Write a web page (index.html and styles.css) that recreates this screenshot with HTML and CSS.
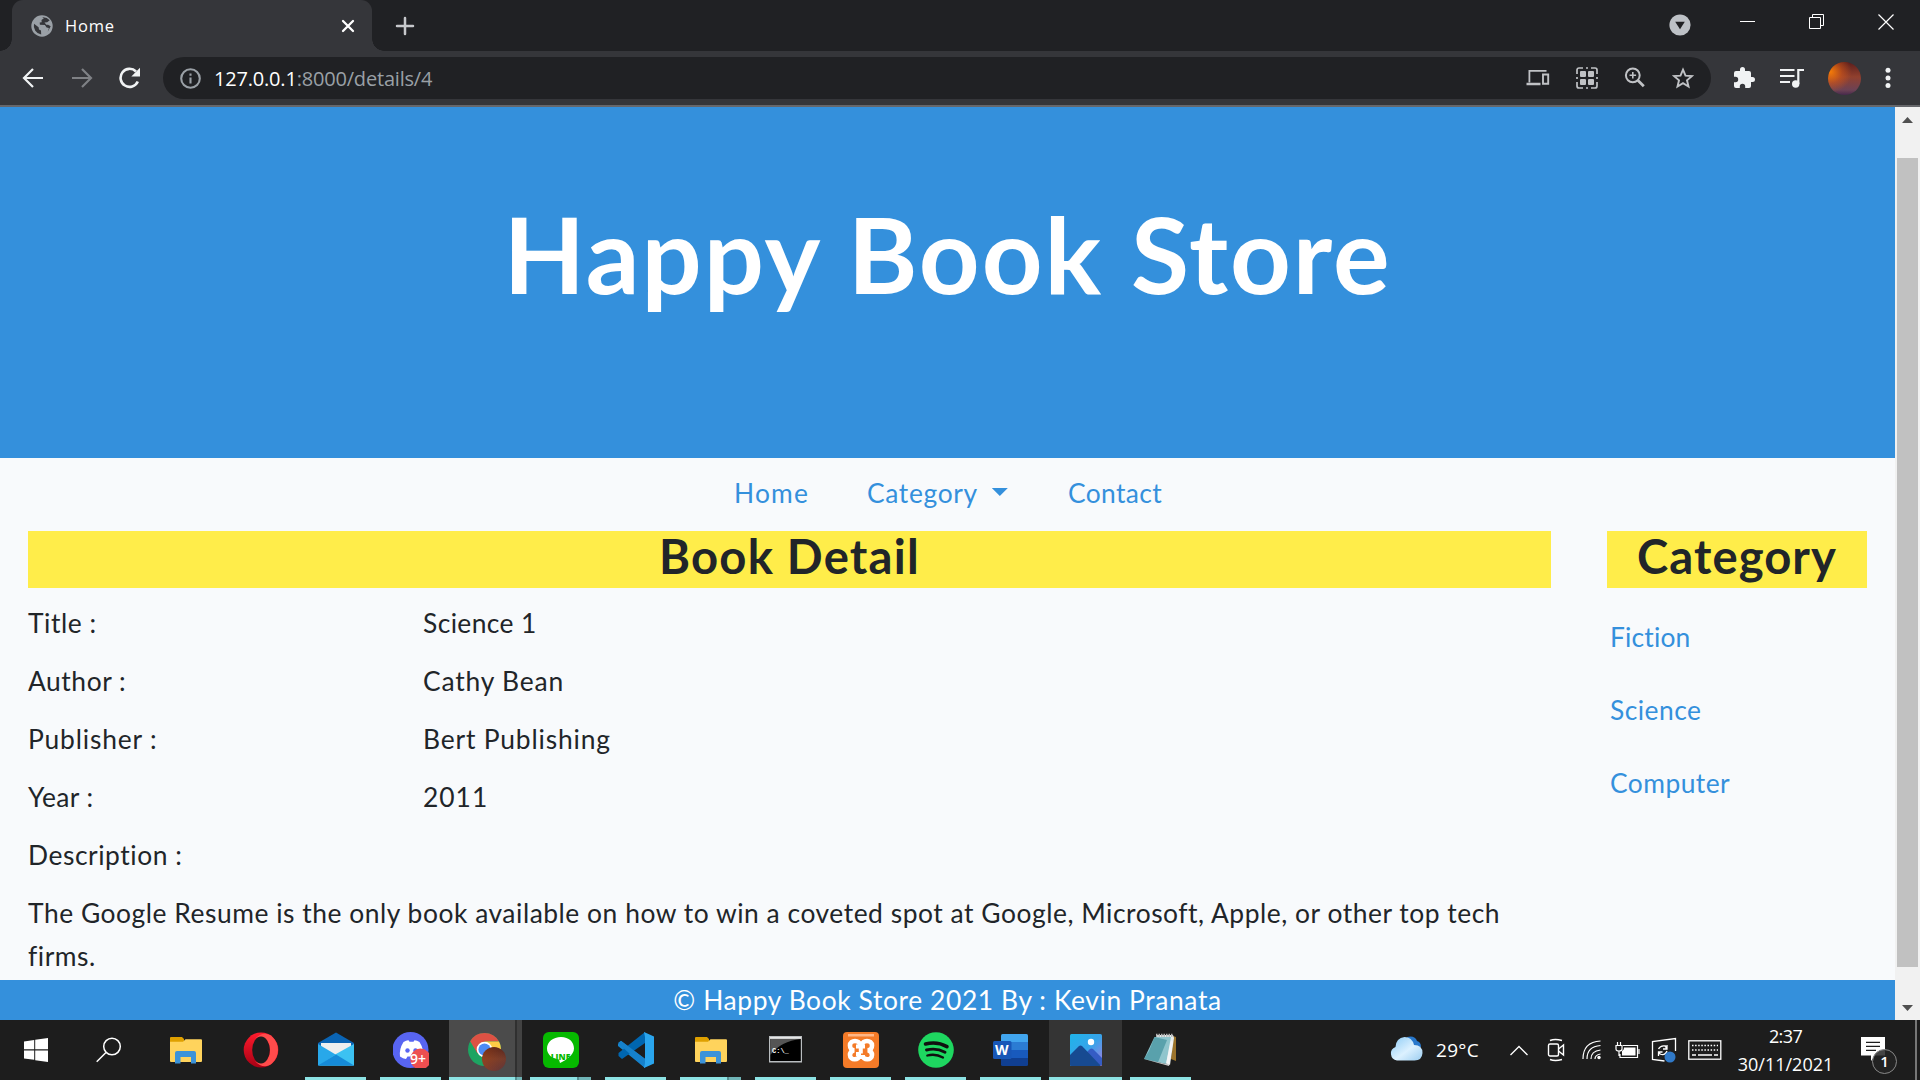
FILE: index.html
```html
<!DOCTYPE html>
<html lang="en">
<head>
<meta charset="utf-8">
<title>Home</title>
<link rel="stylesheet" href="styles.css">
</head>
<body>
<div class="screen">
  <header class="tabstrip">
    <div class="tab">
      <svg class="globe" width="22" height="22" viewBox="0 0 22 22"><circle cx="11" cy="11" r="10.7" fill="#9aa0a6"/><path fill="#35363a" d="M3 8.8l4.6 3.4.4 2.2 2 1.1.2 4A8.8 8.8 0 0 1 3 8.8zM11.2 2.2l1.7 1.1-2.4 1.8.2 2.1-2 .3.2 2.2 5 .2 1.7 2.6 2.3.4-1.2 3.8 3-5.5-2.6-1.5-1.8.1-1.8-2.2 2.7-.3 2.5-2.1a8.8 8.8 0 0 0-7.5-3z"/></svg>
      <span class="tab-title">Home</span>
      <svg class="tab-close" width="14" height="14" viewBox="0 0 14 14" stroke="#fff" stroke-width="2.3" stroke-linecap="round"><path d="M2 2l10 10M12 2L2 12"/></svg>
    </div>
    <svg class="newtab" width="20" height="20" viewBox="0 0 20 20" stroke="#c6c8cb" stroke-width="2.5" stroke-linecap="round"><path d="M10 2v16M2 10h16"/></svg>
    <div class="window-buttons">
      <svg class="tabsearch" width="22" height="22" viewBox="0 0 22 22"><circle cx="11" cy="11" r="10.6" fill="#bdc1c6"/><path d="M6.2 7.8h9.6L11 15.2z" fill="#202124"/></svg>
      <svg class="winbtn" width="16" height="16" viewBox="0 0 16 16"><path d="M0 7.5h15" stroke="#fff"/></svg>
      <svg class="winbtn" width="16" height="16" viewBox="0 0 16 16" fill="none" stroke="#fff"><path d="M.5 3.5h11v11H.5zM3.500 3V.5h11v11h-3"/></svg>
      <svg class="winbtn" width="16" height="16" viewBox="0 0 16 16" stroke="#fff" stroke-width="1.2"><path d="M.5.5l15 15M15.500.5l-15 15"/></svg>
    </div>
  </header>
  <div class="toolbar">
    <svg width="22" height="22" viewBox="0 0 22 22" fill="none" stroke="#f1f3f4" stroke-width="2.2"><path d="M21 11H2.500M11 2L2 11l9 9"/></svg>
    <svg class="forward" width="22" height="22" viewBox="0 0 22 22" fill="none" stroke="#7f8185" stroke-width="2.2"><path d="M1 11h18.500M11 2l9 9-9 9"/></svg>
    <svg class="reload" width="22" height="22" viewBox="0 0 22 22" fill="none" stroke="#f1f3f4" stroke-width="2.6"><path d="M18.800 14.500A9 9 0 1 1 17 4.500"/><path d="M21 .8v8.700h-8.700z" fill="#f1f3f4" stroke="none"/></svg>
    <div class="omnibox">
      <svg width="21" height="21" viewBox="0 0 21 21" fill="none" stroke="#9aa0a6" stroke-width="2.1"><circle cx="10.500" cy="10.500" r="9.300"/><path d="M10.500 9.500v6M10.500 5.500v2.200"/></svg>
      <div class="url"><span class="host">127.0.0.1</span>:8000/details/4</div>
      <div class="omni-icons" >
        <svg width="24" height="22" viewBox="0 0 24 22" fill="none" stroke="#c0c2c5" stroke-width="1.800"><path d="M20.500 3.900H3.400V15.500"/><path d="M.5 17h14" stroke-width="2.500"/><path d="M17 7.500h5.200v9.300H17z" stroke-width="1.900"/></svg>
        <svg width="22" height="22" viewBox="0 0 22 22"><path d="M1 7V3a2 2 0 0 1 2-2h4M10 1h2M15 1h4a2 2 0 0 1 2 2v4M21 10v2M21 15v4a2 2 0 0 1-2 2h-4M12 21h-2M7 21H3a2 2 0 0 1-2-2v-4M1 12v-2" fill="none" stroke="#c0c2c5" stroke-width="1.700"/><g fill="#c0c2c5"><rect x="4" y="4" width="6" height="6" rx="1"/><rect x="12" y="4" width="6" height="6" rx="1"/><rect x="4" y="12" width="6" height="6" rx="1"/><rect x="12" y="12" width="6" height="6" rx="1"/></g></svg>
        <svg width="22" height="22" viewBox="0 0 22 22" fill="none" stroke="#c0c2c5" stroke-width="2"><circle cx="8.800" cy="8.300" r="6.900"/><path d="M13.800 13.300l6 6" stroke-width="2.700"/><path d="M8.800 5v6.600M5.500 8.300h6.600" stroke-width="1.600"/></svg>
        <svg width="22" height="22" viewBox="0 0 22 22" fill="none" stroke="#c0c2c5" stroke-width="1.900"><path d="M11 2.700l2.500 5.900 6.300.5-4.800 4.200 1.500 6.200-5.500-3.300-5.500 3.300L7 13.300 2.200 9.100l6.300-.5z"/></svg>
      </div>
    </div>
    <div class="actions">
      <svg width="24" height="24" viewBox="0 0 24 24"><path fill="#f1f3f4" d="M20.500 11H19V7a2 2 0 0 0-2-2h-4V3.500a2.500 2.500 0 0 0-5 0V5H4a2 2 0 0 0-2 2v3.800h1.500a2.700 2.700 0 0 1 0 5.400H2V20a2 2 0 0 0 2 2h3.800v-1.500a2.700 2.700 0 0 1 5.400 0V22H17a2 2 0 0 0 2-2v-4h1.500a2.500 2.500 0 0 0 0-5z"/></svg>
      <svg width="24" height="24" viewBox="0 0 24 24" fill="none" stroke="#f1f3f4" stroke-width="2.200"><path d="M0 4h14.500M0 10h14.500M0 16h10"/><path d="M18.300 18V4H24"/><circle cx="15.700" cy="18" r="3.700" fill="#f1f3f4" stroke="none"/></svg>
      <div class="avatar"></div>
      <svg class="menu" width="6" height="22" viewBox="0 0 6 22" fill="#f1f3f4"><circle cx="3" cy="3.300" r="2.500"/><circle cx="3" cy="11" r="2.500"/><circle cx="3" cy="18.600" r="2.500"/></svg>
    </div>
  </div>

  <div class="viewport">
    <div class="page">
      <div class="hero"><h1>Happy Book Store</h1></div>
      <nav class="nav">
        <a class="nav-home">Home</a>
        <a class="nav-cat">Category<i class="caret"></i></a>
        <a class="nav-contact">Contact</a>
      </nav>
      <div class="columns">
        <main class="detail">
          <h2>Book Detail</h2>
          <dl class="fields">
            <dt>Title :</dt><dd class="tight">Science 1</dd>
            <dt>Author :</dt><dd class="loose">Cathy Bean</dd>
            <dt class="loose">Publisher :</dt><dd class="loose">Bert Publishing</dd>
            <dt class="tight">Year :</dt><dd class="year">2011</dd>
            <dt>Description :</dt>
          </dl>
          <p class="description">The Google Resume is the only book available on how to win a coveted spot at Google, Microsoft, Apple, or other top tech firms.</p>
        </main>
        <aside class="side">
          <h2>Category</h2>
          <ul>
            <li class="first">Fiction</li>
            <li>Science</li>
            <li>Computer</li>
          </ul>
        </aside>
      </div>
      <footer class="footer">© Happy Book Store 2021 By : Kevin Pranata</footer>
    </div>
    <div class="scrollbar">
      <svg width="11" height="6" viewBox="0 0 11 6"><path d="M0 6L5.500 0 11 6z" fill="#505050"/></svg>
      <div class="thumb"></div>
      <svg width="11" height="6" viewBox="0 0 11 6"><path d="M0 0h11L5.500 6z" fill="#505050"/></svg>
    </div>
  </div>

  <div class="taskbar">
    <svg class="start" width="24" height="24" viewBox="0 0 24 24" fill="#fff"><path d="M0 3.400L10.200 2v9.300H0zM11.200 1.800L24 0v11.300H11.200zM0 12.400h10.200v9.300L0 20.400zM11.200 12.400H24V24l-12.800-1.800z"/></svg>
    <svg class="search" width="26" height="26" viewBox="0 0 26 26" fill="none" stroke="#fff" stroke-width="1.500"><circle cx="16" cy="9.500" r="8.300"/><path d="M10 15.500L.7 24.800"/></svg>
    <div class="apps">
      <div class="app"><svg viewBox="0 0 36 36"><path d="M2 5.500Q2 5 3 5h11l2 2v5H2z" fill="#dfa000"/><path d="M2 9.800h13l2.500-2.500H33Q34 7.300 34 8.300V29q0 1-1 1H3q-1 0-1-1z" fill="#ffd35c"/><path d="M7 31.500V21q0-2 2-2h17q2 0 2 2v10.500h-5V25H12.500v6.500z" fill="#3c93d9"/></svg></div>
      <div class="app"><svg viewBox="0 0 36 36"><defs><linearGradient id="opera" x2="0" y2="1"><stop stop-color="#ff1b2d"/><stop offset="1" stop-color="#a70014"/></linearGradient></defs><ellipse cx="18" cy="18" rx="17.300" ry="17.500" fill="url(#opera)"/><path d="M12 7C17 1 24 0 29 4.500c8 7 8 20 0 27-5 4.500-12 3.500-17-2.500 7 5 15-1 15-11S19 2 12 7z" fill="#ff4b4b"/><ellipse cx="18" cy="18" rx="8.800" ry="13.500" fill="#1d1d1d"/></svg></div>
      <div class="app open"><svg viewBox="0 0 36 36"><path d="M0 11L18 .5 36 11v8H0z" fill="#0a64b4"/><path d="M3 11h30v8L18 27 3 18z" fill="#eee"/><path d="M0 12l36 21.500H0z" fill="#28a8ea"/><path d="M36 12v21.500H1L18 22z" fill="#3cc2f2"/><path d="M18 22.500l18 11H0z" fill="#168bd8"/></svg></div>
      <div class="app open"><svg viewBox="0 0 36 36"><circle cx="17.500" cy="18" r="18" fill="#5865f2"/><path d="M10.500 10q3-2 5-1.800l1 1.500h4l1-1.500q2.500 0 5 1.800 4.500 7 3.500 14.500-3 2.500-6 2.500l-1.500-2.500h-8L13 27q-3-.3-6-2.500Q6 17 10.500 10z" fill="#fff"/><circle cx="14.500" cy="18.500" r="2.200" fill="#5865f2"/><circle cx="22.500" cy="18.500" r="2.200" fill="#5865f2"/><circle cx="27.500" cy="27" r="10.400" fill="#ed4f50"/></svg><span class="badge">9+</span></div>
      <div class="app open active stack"><svg viewBox="0 0 36 36"><circle cx="16.500" cy="17.500" r="16.500" fill="#1da462"/><path d="M2.200 9.200A16.500 16.500 0 0 1 31 9.500H16.500l-7 12z" fill="#dd5144"/><path d="M31 9.500A16.500 16.500 0 0 1 16.500 34l7.500-12-7-12.500z" fill="#ffcd46"/><circle cx="16.500" cy="17.500" r="7.800" fill="#fff"/><circle cx="16.500" cy="17.500" r="6.100" fill="#4c8bf5"/></svg><i class="profile"></i></div>
      <div class="app open stack"><svg viewBox="0 0 36 36"><rect width="36" height="36" rx="6" fill="#06b900"/><path d="M18 5C10 5 4 10 4 16.500c0 6 5 10 12 11l1 3.500c5-2 14-8 14-14.500C31 10 26 5 18 5z" fill="#fff"/></svg><span class="line-text">LINE</span></div>
      <div class="app open"><svg viewBox="0 0 36 36"><path d="M0 12l3-3 24 18v9L0 14z" fill="#1485cf"/><path d="M27 0v11L4 27l-3.500-3V21z" fill="#0066b0"/><path d="M0 11l3-2.200 24 18V36z" fill="#1681cb"/><path d="M26 0l10 4.500v27L26 36l1-5V5z" fill="#2aa5ed"/></svg></div>
      <div class="app open stack"><svg viewBox="0 0 36 36"><path d="M2 5.500Q2 5 3 5h11l2 2v5H2z" fill="#dfa000"/><path d="M2 9.800h13l2.500-2.500H33Q34 7.300 34 8.300V29q0 1-1 1H3q-1 0-1-1z" fill="#ffd35c"/><path d="M7 31.500V21q0-2 2-2h17q2 0 2 2v10.500h-5V25H12.500v6.500z" fill="#3c93d9"/></svg></div>
      <div class="app open"><svg viewBox="0 0 36 36"><rect x="1" y="4" width="33" height="26.500" fill="#b9bdc0"/><path d="M2.200 7h30.600v22H2.200z"/><path d="M2.200 7h30.600Q13 9 2.200 23z" fill="#555"/><path d="M2 5h31v1.500H2z" fill="#e6e6e6"/></svg><span class="prompt">C:\_</span></div>
      <div class="app open"><svg viewBox="0 0 36 36"><rect width="36" height="36" rx="4" fill="#f47b28"/><path d="M5 2h26v2.500H5z" fill="#ffb787"/><path d="M13 14.500h9M17.800 14.500v7M13 22h5" stroke="#fff" stroke-width="4"/><path d="M17 13.500c0-6-10-6-10 0 0 3 1 4 4 4.700-3 .8-4 2-4 4.800 0 6 9.500 5.500 9.500 0M19 13.500c0-6 10-6 10 0 0 3-1 4-4 4.700 3 .8 4 2 4 4.800 0 6-9.500 5.500-9.500 0" fill="none" stroke="#fff" stroke-width="4.600"/></svg></div>
      <div class="app open"><svg viewBox="0 0 36 36"><circle cx="18" cy="18" r="17.800" fill="#1ed760"/><g fill="none" stroke="#10100f" stroke-linecap="round"><path d="M7.500 12q11.500-3 21.500 2.600" stroke-width="3.500"/><path d="M8.500 18q10-2.500 18.500 2.300" stroke-width="2.900"/><path d="M9.300 23.500q8.200-2.200 15.700 2" stroke-width="2.300"/></g></svg></div>
      <div class="app open"><svg viewBox="0 0 36 36"><path d="M8 10V3.500Q8 2 9.500 2h24Q35 2 35 3.500V10z" fill="#41a5ee"/><path d="M8 10h27v8H8z" fill="#2b7cd3"/><path d="M8 18h27v8H8z" fill="#185abd"/><path d="M8 26h27v6.500q0 1.500-1.500 1.500h-24Q8 34 8 32.500z" fill="#103f91"/><rect y="9" width="18.500" height="18" rx="1.500" fill="#1857b7"/></svg><span class="word">W</span></div>
      <div class="app open lit"><svg viewBox="0 0 36 36"><defs><linearGradient id="sky" x2="1" y2="1"><stop stop-color="#1fb4e9"/><stop offset=".5" stop-color="#36a4ea"/><stop offset="1" stop-color="#a77be0"/></linearGradient></defs><rect x="2" y="2" width="32" height="32" rx="1.500" fill="url(#sky)"/><circle cx="23" cy="10" r="3.200" fill="#fff"/><path d="M15 24l7-7q1.500-1 3 0l9 9v7H15z" fill="#355cc4"/><path d="M2 23l9-9q1.500-1.200 3 0l19 20H3.500Q2 34 2 32.500z" fill="#174a91"/></svg></div>
      <div class="app open"><svg viewBox="0 0 36 36"><path d="M30 4l3 1v24l-5-2z" fill="#9b732b"/><path d="M13 3h17l1 3-4 27-6-3z" fill="#e6eced"/><path d="M11.500 5H28l-5 27L1 27z" fill="#8fc5cd"/><path d="M11.500 5L6 19l-5 8 14 3.200L24 8z" fill="#3c8d99" opacity=".65"/><path d="M13 3.200h17" stroke="#b5b5b5" stroke-width="3" stroke-dasharray="1.500 1"/><path d="M1 27l22 5 5-24 2 2-4 24z" fill="#f7f7f7" opacity=".8"/></svg></div>
    </div>
    <div class="tray">
      <div class="weather">
        <svg width="33" height="30" viewBox="0 0 33 30"><defs><linearGradient id="cloud" x2="1" y2="1"><stop stop-color="#8acaf5"/><stop offset=".55" stop-color="#dcf1ff"/><stop offset="1" stop-color="#9bcdf0"/></linearGradient></defs><path d="M17 2q8-2 10 4 4 1 4 6l-7 2z" fill="#2878cc"/><path d="M7 25.500a7 7 0 0 1-1.500-13.500Q6 3 14.500 2 22 2 24 10q8.500 0 8.500 8-.5 7.500-8 7.500z" fill="url(#cloud)"/></svg>
        <span>29°C</span>
      </div>
      <div class="slot chevron"><svg width="18" height="11" viewBox="0 0 18 11" fill="none" stroke="#fff" stroke-width="1.300"><path d="M.5 10L9 1.500l8.500 8.500"/></svg></div>
      <div class="slot meet"><svg width="18" height="24" viewBox="0 0 18 24" fill="none" stroke="#fff" stroke-width="1.400"><rect x="1.500" y="6" width="10" height="12" rx="1.500"/><path d="M11.500 11l5-4v10l-5-4M3 2.500q5-2 12 0M3 21.500q5 2 12 0"/></svg></div>
      <div class="slot wifi"><svg width="20" height="20" viewBox="0 0 20 20" fill="none" stroke="#fff" stroke-width="1.200"><path d="M1 19Q1 2 18.500 1M5 19Q5 6.500 18.500 5.500M9 19q0-8 9.500-9M13 19q0-4 5.500-5"/><circle cx="17" cy="17.500" r="1.700" fill="#fff" stroke="none"/></svg></div>
      <div class="slot battery"><svg width="25" height="18" viewBox="0 0 25 18" fill="none" stroke="#fff" stroke-width="1.200"><path d="M8 4.500h14.500v12H5V13M24 8v5M2.500 1v3M5.500 1v3M1 4.500h6V8q0 2-3 2T1 8zM4 10v5"/><path d="M9 6.500h11.500v8H7V10q2-1 2-3z" fill="#fff" stroke="none"/></svg></div>
      <div class="slot sync"><svg width="26" height="26" viewBox="0 0 26 26" fill="none" stroke="#fff" stroke-width="1.300"><path d="M24.500 14V1.500L1.500 4.500v18l12 1.500"/><path d="M7.500 12q2-4 7-3l1 3M16 8v4h-4M16 14q-2 5-7 3l-1-2M7.500 19v-4h4" /><circle cx="19" cy="20" r="5.500" fill="#3079c8" stroke="none"/></svg></div>
      <div class="slot keyboard"><svg width="34" height="20" viewBox="0 0 34 20" fill="none" stroke="#fff" stroke-width="1.300"><rect x=".8" y=".8" width="32" height="18.400"/><path d="M4 5.500h26M4 10h26" stroke-dasharray="1.500 1.600"/><path d="M4 15h4M10 15h14M26 15h4"/></svg></div>
      <div class="clock"><span class="time">2:37</span><span>30/11/2021</span></div>
      <div class="notify">
        <svg width="24" height="26" viewBox="0 0 24 26"><path d="M0 0h24v18.500h-9.500L10 24v-5.500H0z" fill="#fff"/><path d="M5 5.300h14M5 9.300h14M5 13.300h10" stroke="#1d1d1d" stroke-width="1.300"/></svg>
        <span class="count">1</span>
      </div>
      <div class="show-desktop"></div>
    </div>
  </div>
</div>
</body>
</html>
```
FILE: styles.css
```css
* { box-sizing: border-box; }
body { margin: 0; background: #202124; }
svg { display: block; flex: none; }
h1, h2, p, ul, dl, dd { margin: 0; padding: 0; }

.screen {
  width: 1920px;
  height: 1080px;
  overflow: hidden;
  display: flex;
  flex-direction: column;
  font-family: "Open Sans", "Noto Sans", sans-serif;
}

/* Browser window */
.tabstrip { height: 51px; flex: none; display: flex; align-items: flex-start; padding-left: 12px; background: #202124; }
.tab {
  position: relative;
  width: 360px;
  height: 51px;
  display: flex;
  align-items: center;
  padding: 0 17px 0 19px;
  border-radius: 11px 11px 0 0;
  background: #35363a;
}
.tab::before, .tab::after {
  content: "";
  position: absolute;
  bottom: 0;
  width: 12px;
  height: 12px;
}
.tab::before { left: -12px; background: radial-gradient(circle at 0 0, transparent 11.5px, #35363a 12px); }
.tab::after { right: -12px; background: radial-gradient(circle at 100% 0, transparent 11.5px, #35363a 12px); }
.tab-title { flex: 1; margin-left: 12px; color: #fff; font-size: 16.5px; letter-spacing: .8px; }
.newtab { margin: 16px 0 0 23px; }
.window-buttons { display: flex; align-items: flex-start; margin-left: auto; padding: 14px 26px 0 0; gap: 53px; }
.tabsearch { margin-right: -4px; }

.toolbar {
  height: 56px;
  flex: none;
  display: flex;
  align-items: center;
  padding: 0 29px 0 22px;
  border-bottom: 2px solid #66676b;
  background: #35363a;
}
.forward { margin-left: 27px; }
.reload { margin-left: 26px; }
.omnibox {
  width: 1548px;
  height: 42px;
  margin-left: 22px;
  display: flex;
  align-items: center;
  padding: 0 17px;
  border-radius: 21px;
  background: #202124;
}
.url { margin-left: 13px; color: #9aa0a6; font-size: 20px; letter-spacing: -.19px; }
.host { color: #fff; }
.omni-icons { display: flex; gap: 26px; margin-left: auto; }
.actions { flex: 1; display: flex; align-items: center; justify-content: space-between; padding-left: 21px; }
.avatar {
  width: 33px;
  height: 33px;
  border-radius: 50%;
  background:
    radial-gradient(circle at 8% 30%, #f47a08 0, rgba(220, 90, 20, .5) 30%, transparent 55%),
    linear-gradient(#5b1e1c, #91402e 45%, #6c4255 85%, #46294c);
}

/* Web page */
.viewport { height: 913px; flex: none; display: flex; }
.page {
  width: 1895px;
  display: flex;
  flex-direction: column;
  background: #f8fafc;
  color: #212529;
  font: 26.4px/43.2px Lato, "Noto Sans", sans-serif;
  letter-spacing: .55px;
}
.hero { height: 351px; flex: none; padding-top: 82px; background: #3490dc; color: #fff; text-align: center; }
.hero h1 { font-size: 106px; font-weight: 700; line-height: 129px; letter-spacing: 2.03px; }
.nav { height: 73px; flex: none; display: flex; padding: 14px 0 0 734px; color: #3490dc; }
.nav-home { width: 133px; letter-spacing: 1.2px; }
.nav-cat { width: 201px; display: flex; letter-spacing: .65px; }
.nav-contact { letter-spacing: .35px; }
.caret { margin: 16px 0 0 14px; width: 16px; height: 8px; background: #3490dc; clip-path: polygon(0 0, 100% 0, 50% 100%); }
.columns { height: 449px; flex: none; display: flex; justify-content: space-between; padding: 0 28px; }
.detail { width: 1523px; }
.columns h2 {
  height: 57px;
  background: #ffed4a;
  font-size: 47.2px;
  font-weight: 700;
  line-height: 49.4px;
  letter-spacing: 1.22px;
  text-align: center;
}
.fields { display: grid; grid-template-columns: 395px 1fr; grid-auto-rows: 58.2px; padding-top: 5.7px; line-height: 58.2px; }
.tight { letter-spacing: .4px; }
.loose { letter-spacing: .83px; }
.year { letter-spacing: 1px; }
.description { margin-top: 7.5px; letter-spacing: .534px; }
.side { width: 260px; }
.side h2 { letter-spacing: 1.06px; }
.side ul { list-style: none; padding: 13px 0 0 3px; color: #3490dc; line-height: 73.2px; letter-spacing: .46px; }
.side .first { letter-spacing: .16px; }
.footer { height: 40px; flex: none; background: #3490dc; color: #fff; line-height: 40px; text-align: center; letter-spacing: .605px; }

.scrollbar { width: 25px; display: flex; flex-direction: column; align-items: center; padding: 10px 0 9px; background: #f1f1f1; }
.thumb { width: 21px; height: 809px; margin: 35px 0 38px; background: #c1c1c1; }

/* Taskbar */
.taskbar { height: 60px; flex: none; display: flex; align-items: center; background: #1d1d1d; color: #fff; }
.start { margin-left: 24px; }
.search { margin: 0 26px 0 48px; }
.apps { display: flex; height: 60px; }
.app {
  position: relative;
  width: 75px;
  height: 60px;
  display: flex;
  align-items: center;
  justify-content: center;
}
.app svg { width: 36px; height: 36px; }
.app.open { background: linear-gradient(#8de3e4, #8de3e4) 7px 57px / 61px 3px no-repeat; }
.app.open.stack { background: linear-gradient(90deg, #8de3e4 47px, #538f90 47px, #538f90 49px, #70b5b7 49px) 7px 57px / 61px 3px no-repeat; }
.app.open.active {
  background:
    linear-gradient(90deg, #8de3e4 66px, #538f90 66px, #538f90 68px, #70b5b7 68px) 1px 57px / 73px 3px no-repeat,
    linear-gradient(90deg, #4b4b4b 66px, #303030 66px, #303030 68px, #424242 68px) 1px 0 / 73px 60px no-repeat;
}
.app.open.lit {
  background:
    linear-gradient(#8de3e4, #8de3e4) 1px 57px / 73px 3px no-repeat,
    linear-gradient(#343434, #343434) 1px 0 / 73px 60px no-repeat;
}
.badge { position: absolute; left: 37px; top: 31px; font-size: 14px; line-height: 16px; font-weight: 600; }
.profile {
  position: absolute;
  left: 34px;
  top: 27px;
  width: 24px;
  height: 24px;
  border-radius: 50%;
  background: linear-gradient(70deg, rgba(190, 75, 15, .5), transparent), linear-gradient(#54231c, #6e3a2e 50%, #4d3142);
}
.line-text { position: absolute; left: 0; width: 75px; top: 30px; color: #06b900; font-size: 8.5px; font-weight: 800; line-height: 16px; text-align: center; margin-top: -1px; }
.prompt { position: absolute; left: 24px; top: 28px; font: 700 7px/9px "Liberation Mono", monospace; margin-top: -1px; }
.word { position: absolute; left: 22px; top: 41px; font-size: 14px; font-weight: 700; line-height: 18px; margin-top: -20px; }

.tray { flex: 1; height: 60px; display: flex; align-items: center; padding-left: 192px; font-size: 18px; }
.weather { width: 108px; display: flex; align-items: center; gap: 13px; font-size: 19px; letter-spacing: .3px; }
.slot { display: flex; justify-content: center; }
.chevron { width: 42px; }
.meet { width: 32px; }
.wifi { width: 40px; }
.battery { width: 30px; }
.sync { width: 43px; }
.keyboard { width: 39px; }
.clock { width: 123px; display: flex; flex-direction: column; align-items: center; line-height: 28px; }
.time { letter-spacing: -.6px; }
.notify { position: relative; width: 68px; padding-left: 14px; }
.count {
  position: absolute;
  left: 25px;
  top: 12px;
  width: 25px;
  height: 25px;
  border: 1px solid #888;
  border-radius: 50%;
  background: rgba(35, 35, 35, .85);
  font-size: 15px;
  font-weight: 600;
  line-height: 23px;
  text-align: center;
}
.show-desktop { width: 2px; height: 60px; background: #777; }
```
